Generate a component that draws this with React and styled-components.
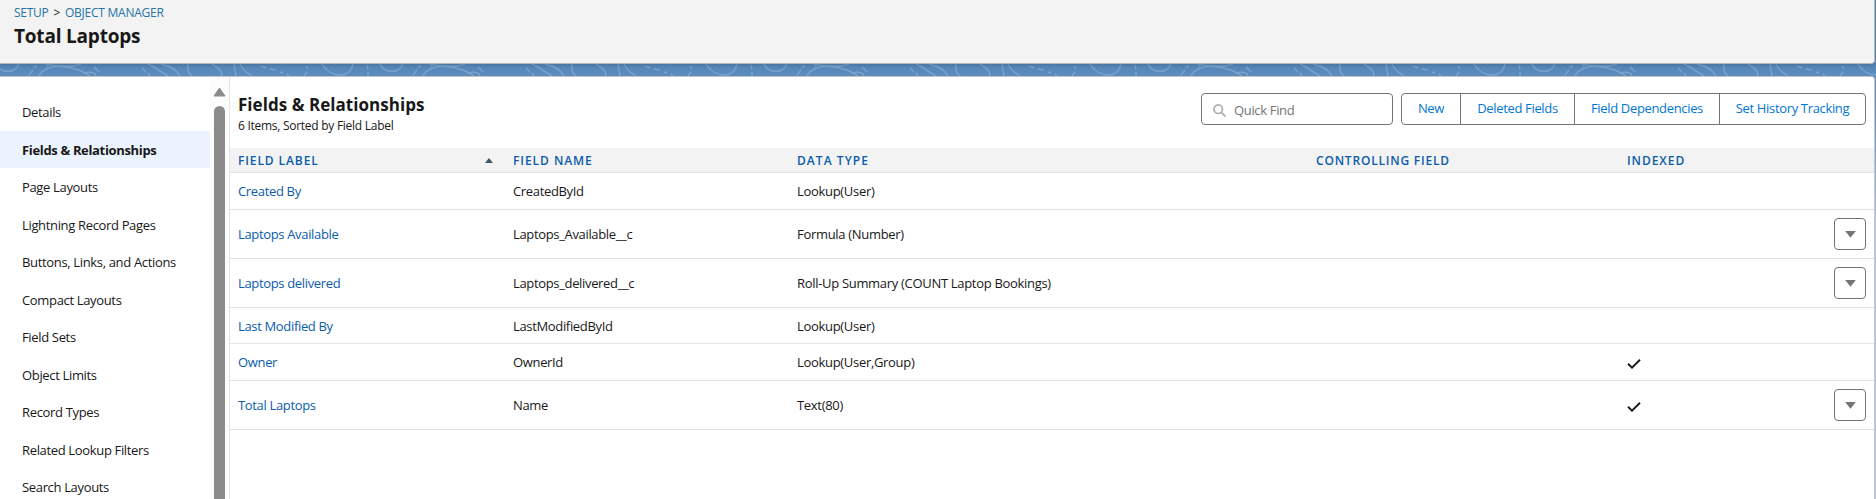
import React from "react";
import styled, { createGlobalStyle } from "styled-components";

const Global = createGlobalStyle`
  *, *::before, *::after { box-sizing: border-box; }
  html, body, #root { height: 100%; }
  body { margin: 0; overflow: hidden; font-family: "Open Sans", "Noto Sans", sans-serif; font-size: 13px; line-height: 19.5px; color: #181818; }
`;

const Text = styled.span`
  letter-spacing: ${(p) => p.$track ?? -0.34}px;
  white-space: nowrap;
`;

const Page = styled.div`
  position: relative;
  height: 100vh;
  display: flex;
  flex-direction: column;
  gap: 12px;
  padding-right: 1px;
  background: linear-gradient(#5283b5 62px, #5b8cbf 74px, #5b8cbf 110px, #b0c4df 220px);
`;

/* Topographic line pattern in the strip between the header and the body. */
const Contours = styled.svg`
  position: absolute;
  left: 0;
  top: 64px;
  width: 100%;
  height: 12px;
`;

const Header = styled.header`
  position: relative;
  height: 64px;
  flex: none;
  padding: 3px 14px 0;
  background: #f3f3f3;
  border-bottom: 1px solid #b9b9b9;
  border-right: 1px solid #b9b9b9;
  border-radius: 0 0 4px 0;
  box-shadow: 0 2px 2px rgba(0, 0, 0, 0.1);
`;

const Breadcrumb = styled.nav`
  display: flex;
  gap: 5px;
  font-size: 12px;
  line-height: 19px;
`;

const Link = styled.a`
  color: ${(p) => (p.$crumb ? "#2574a9" : "#0b5cab")};
  text-decoration: none;
`;

const PageTitle = styled.h1`
  margin: 2px 0 0;
  font-size: 19px;
  line-height: 25px;
  font-weight: 700;
`;

const Body = styled.main`
  position: relative;
  flex: 1;
  min-height: 0;
  display: flex;
  background: #fff;
  border-top: 1px solid #c4c4c4;
  border-right: 1px solid #c4c8d0;
  border-radius: 0 4px 0 0;
`;

const Sidebar = styled.aside`
  width: 210px;
  flex: none;
  padding-top: 16.4px;
  overflow: hidden;
`;

const NavItem = styled.div`
  height: 37.5px;
  padding: 9px 22px 0;
  line-height: 21px;
  background: ${(p) => (p.$active ? "#ebf3fe" : "transparent")};
  font-weight: ${(p) => (p.$active ? 700 : 400)};
`;

const Scrollbar = styled.div`
  width: 19px;
  flex: none;
  display: flex;
  flex-direction: column;
  align-items: center;
  gap: 9px;
  padding-top: 10px;
  background: #fcfcfc;
`;

const Thumb = styled.div`
  width: 11px;
  flex: 1;
  background: #8b8b8b;
  border-radius: 6px 6px 0 0;
`;

const Content = styled.section`
  flex: 1;
  border-left: 1px solid #e5e5e5;
`;

const Toolbar = styled.div`
  height: 71px;
  display: flex;
  align-items: flex-start;
  padding: 16px 8px 0;
`;

const Heading = styled.div`
  flex: 1;
`;

const SectionTitle = styled.h2`
  margin: 0;
  font-size: 17px;
  line-height: 24px;
  font-weight: 700;
`;

const Summary = styled.div`
  font-size: 12px;
  line-height: 18px;
`;

const Search = styled.div`
  width: 192px;
  height: 32px;
  display: flex;
  align-items: center;
  gap: 8px;
  padding: 3px 12px 0 11px;
  margin-right: 8px;
  border: 1px solid #747474;
  border-radius: 4px;
  color: #747474;
`;

const ButtonGroup = styled.div`
  display: flex;
  height: 32px;
  border: 1px solid #747474;
  border-radius: 4px;
`;

const Button = styled.button`
  width: ${(p) => p.$w}px;
  padding: 0;
  border: 0;
  border-left: ${(p) => (p.$first ? "0" : "1px solid #747474")};
  background: none;
  font: inherit;
  color: #0176d3;
  white-space: nowrap;
`;

const Row = styled.div`
  display: grid;
  grid-template-columns: 275px 284px 519px 311px 1fr;
  align-items: center;
  height: ${(p) => p.$h}px;
  padding: 0 8px;
  border-bottom: 1px solid #e2e2e2;
`;

const HeadRow = styled(Row)`
  background: #f3f3f3;
  font-size: 12px;
  font-weight: 650;
  color: #0b5cab;
`;

const HeadCell = styled.div`
  display: flex;
  align-items: center;
  justify-content: space-between;
  padding-right: 20px;
  padding-top: 1px;
`;

const Cell = styled.div`
  padding-top: 2px;
`;

const ActionCell = styled.div`
  display: flex;
  align-items: center;
`;

const Check = styled.svg`
  margin-top: 3px;
`;

const MenuButton = styled.button`
  width: 32px;
  height: 32px;
  margin-left: auto;
  padding: 1px 0 0;
  display: flex;
  align-items: center;
  justify-content: center;
  background: #fff;
  border: 1px solid #747474;
  border-radius: 4px;
`;

const nav = [
  "Details", "Fields & Relationships", "Page Layouts", "Lightning Record Pages",
  "Buttons, Links, and Actions", "Compact Layouts", "Field Sets", "Object Limits",
  "Record Types", "Related Lookup Filters", "Search Layouts",
];

const rows = [
  { h: 37, label: "Created By", name: "CreatedById", type: "Lookup(User)" },
  { h: 49, label: "Laptops Available", name: "Laptops_Available__c", type: "Formula (Number)", menu: true },
  { h: 49, label: "Laptops delivered", name: "Laptops_delivered__c", type: "Roll-Up Summary (COUNT Laptop Bookings)", menu: true },
  { h: 36, label: "Last Modified By", name: "LastModifiedById", type: "Lookup(User)" },
  { h: 37, label: "Owner", name: "OwnerId", type: "Lookup(User,Group)", indexed: true },
  { h: 49, label: "Total Laptops", name: "Name", type: "Text(80)", indexed: true, menu: true },
];

const contourPath =
  "M-4 0C1 10 15 10 19 0M380 0C385 10 399 10 403 0" +
  "M39 12C43 4 54 1 66 3C79 5 86 9 90 12M47 0L48 3M47 0C58 3 72 3 81 0M84 10C88 7 95 8 96 12" +
  "M29 11L33 6M34 4L37 1M94 3L99 8M142 4L146 8M148 9L150 12" +
  "M148 0C156 3 160 8 168 12M161 0C170 2 177 6 180 12M188 0C187 5 188 9 192 12" +
  "M212 0C219 4 222 8 222 12M234 0L236 12M240 0C243 6 247 9 252 12" +
  "M261 2L266 4M270 5L276 6M280 8L283 9M287 10L289 12M306 2L308 5M307 8L304 12" +
  "M322 0C330 14 350 15 353 0M367 1L368 5M368 8L368 12";

export default function App() {
  return (
    <>
      <Global />
      <Page>
        <Contours aria-hidden="true">
          <defs>
            <pattern id="contour" width="384" height="12" patternUnits="userSpaceOnUse">
              <path d={contourPath} fill="none" stroke="#fff" strokeOpacity="0.2" strokeWidth="1.4" />
            </pattern>
          </defs>
          <rect width="100%" height="12" fill="url(#contour)" />
        </Contours>
        <Header>
          <Breadcrumb><Link $crumb><Text $track={-0.27}>SETUP</Text></Link><Text>&gt;</Text><Link $crumb><Text $track={-0.25}>OBJECT MANAGER</Text></Link></Breadcrumb>
          <PageTitle><Text $track={-0.2}>Total Laptops</Text></PageTitle>
        </Header>
        <Body>
          <Sidebar>
            {nav.map((label, i) => <NavItem key={label} $active={i === 1}><Text>{label}</Text></NavItem>)}
          </Sidebar>
          <Scrollbar>
            <svg width="13" height="10"><path d="M6.5 1 12 9H1Z" fill="#8b8b8b" stroke="#8b8b8b" strokeLinejoin="round" /></svg>
            <Thumb />
          </Scrollbar>
          <Content>
            <Toolbar>
              <Heading>
                <SectionTitle><Text $track={0.04}>Fields &amp; Relationships</Text></SectionTitle>
                <Summary><Text $track={-0.27}>6 Items, Sorted by Field Label</Text></Summary>
              </Heading>
              <Search>
                <svg width="13" height="13" fill="none" stroke="#aeaeae" strokeWidth="1.7"><circle cx="5.2" cy="5.2" r="4.3" /><path d="m8.3 8.3 4.2 4.2" /></svg>
                <Text>Quick Find</Text>
              </Search>
              <ButtonGroup>
                <Button $w={58} $first><Text>New</Text></Button>
                <Button $w={114}><Text>Deleted Fields</Text></Button>
                <Button $w={145}><Text>Field Dependencies</Text></Button>
                <Button $w={146}><Text>Set History Tracking</Text></Button>
              </ButtonGroup>
            </Toolbar>
            <HeadRow $h={25}>
              <HeadCell><Text $track={0.9}>FIELD LABEL</Text><svg width="8" height="6"><path d="M4 0 8 5H0Z" fill="#44546a" /></svg></HeadCell>
              <HeadCell><Text $track={0.95}>FIELD NAME</Text></HeadCell>
              <HeadCell><Text $track={1.05}>DATA TYPE</Text></HeadCell>
              <HeadCell><Text $track={0.8}>CONTROLLING FIELD</Text></HeadCell>
              <HeadCell><Text $track={0.95}>INDEXED</Text></HeadCell>
            </HeadRow>
            {rows.map((r) => (
              <Row key={r.label} $h={r.h}>
                <Cell><Link><Text>{r.label}</Text></Link></Cell>
                <Cell><Text>{r.name}</Text></Cell>
                <Cell><Text $track={-0.31}>{r.type}</Text></Cell>
                <Cell />
                <ActionCell>
                  {r.indexed && <Check width="14" height="10" fill="none" stroke="#181818" strokeWidth="1.9"><path d="m1 4.8 4 3.8L13 .8" /></Check>}
                  {r.menu && <MenuButton aria-label="Row actions"><svg width="11" height="7"><path d="M0.2 0H10.8L5.5 6.8Z" fill="#747474" /></svg></MenuButton>}
                </ActionCell>
              </Row>
            ))}
          </Content>
        </Body>
      </Page>
    </>
  );
}
